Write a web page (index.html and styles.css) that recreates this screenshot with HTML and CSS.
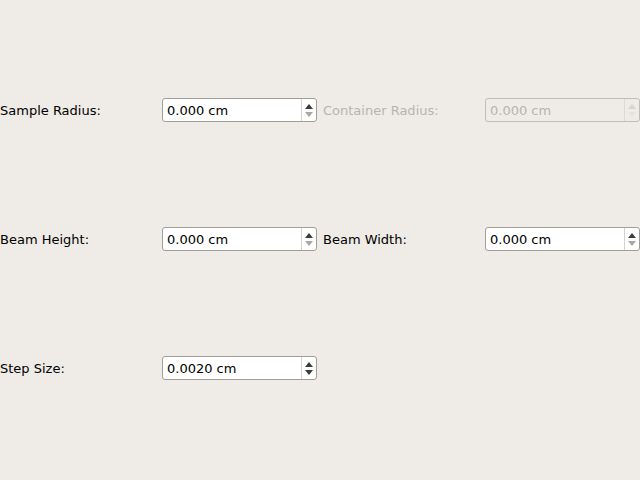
FILE: index.html
```html
<!DOCTYPE html>
<html>
<head>
<meta charset="utf-8">
<link rel="stylesheet" href="styles.css">
</head>
<body>
<div class="form">
  <div class="label">Sample Radius:</div>
  <div class="spin">
    <span class="value">0.000 cm</span>
    <span class="buttons"><span class="up"></span><span class="down off"></span></span>
  </div>
  <div class="label dis">Container Radius:</div>
  <div class="spin disabled">
    <span class="value">0.000 cm</span>
    <span class="buttons"><span class="up off"></span><span class="down off"></span></span>
  </div>

  <div class="label">Beam Height:</div>
  <div class="spin">
    <span class="value">0.000 cm</span>
    <span class="buttons"><span class="up"></span><span class="down off"></span></span>
  </div>
  <div class="label">Beam Width:</div>
  <div class="spin">
    <span class="value">0.000 cm</span>
    <span class="buttons"><span class="up"></span><span class="down off"></span></span>
  </div>

  <div class="label">Step Size:</div>
  <div class="spin">
    <span class="value">0.0020 cm</span>
    <span class="buttons"><span class="up"></span><span class="down"></span></span>
  </div>
</div>
</body>
</html>
```
FILE: styles.css
```css
html, body {
  margin: 0;
  padding: 0;
  background: #efebe7;
  width: 640px;
  height: 480px;
  overflow: hidden;
}
.form {
  display: grid;
  grid-template-columns: 162px 161px 162px 155px;
  grid-auto-rows: 24px;
  row-gap: 105px;
  padding-top: 98px;
  font-family: "DejaVu Sans", sans-serif;
  font-size: 13px;
  color: #000;
}
.label {
  display: flex;
  align-items: center;
}
.label.dis {
  color: #b8b4b0;
}
.spin {
  width: 155px;
  height: 24px;
  box-sizing: border-box;
  border: 1px solid #a29e9a;
  border-radius: 3px;
  background: #fff;
  display: flex;
  align-items: stretch;
}
.spin .value {
  flex: 1;
  display: flex;
  align-items: center;
  padding-left: 4px;
}
.spin .buttons {
  width: 14px;
  border-left: 1px solid #d6d2ce;
  display: flex;
  flex-direction: column;
  align-items: center;
  justify-content: center;
  gap: 3px;
}
.up, .down {
  width: 0;
  height: 0;
  border-left: 4px solid transparent;
  border-right: 4px solid transparent;
}
.up {
  border-bottom: 5px solid #3c3c3c;
}
.down {
  border-top: 5px solid #3c3c3c;
}
.up.off { border-bottom-color: #c8c4c0; }
.down.off { border-top-color: #aaa6a2; }
.spin.disabled {
  background: #efebe7;
  border-color: #c0bcb8;
  color: #b8b4b0;
}
.spin.disabled .buttons {
  border-left-color: #dedad6;
}
.spin.disabled .up.off { border-bottom-color: #d8d4d0; }
.spin.disabled .down.off { border-top-color: #e6e2de; }
```
